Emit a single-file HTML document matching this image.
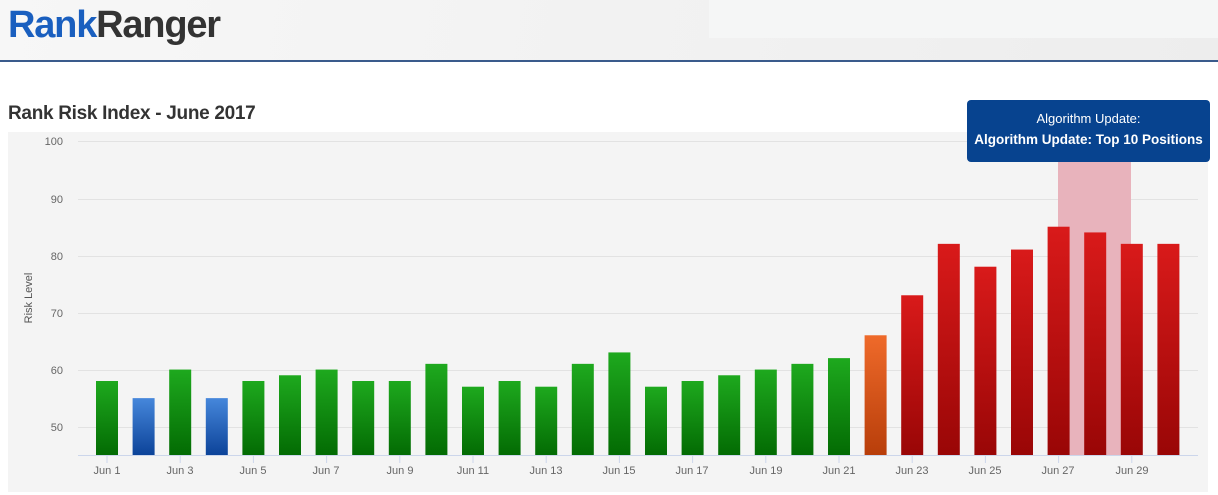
<!DOCTYPE html>
<html><head><meta charset="utf-8"><style>
body{margin:0;width:1218px;height:495px;overflow:hidden;background:#fff;font-family:"Liberation Sans",sans-serif;position:relative}
.hdr{position:absolute;left:0;top:0;width:1218px;height:60px;background:linear-gradient(100deg,#f7f7f7,#ededed);border-bottom:2px solid #3a5b8c}
.blk{position:absolute;left:709px;top:0;width:509px;height:38px;background:#f5f6f6}
.logo{position:absolute;left:8px;top:4px;font-size:38px;font-weight:bold;letter-spacing:-1.2px;color:#333}
.logo span{color:#1a5fbf}
h1{position:absolute;left:8px;top:103px;margin:0;font-size:19px;font-weight:bold;color:#333;letter-spacing:-0.3px}
.tip{position:absolute;left:967px;top:100px;width:243px;height:62px;background:#07438f;border-radius:4px;color:#fff;text-align:center;font-size:13px}
</style></head><body>
<div class="hdr"><div class="blk"></div><div class="logo"><span>Rank</span>Ranger</div></div>
<h1>Rank Risk Index - June 2017</h1>
<svg id="c" width="1218" height="495" style="position:absolute;left:0;top:0">
<defs>
<linearGradient id="g" x1="0" y1="0" x2="0" y2="1"><stop offset="0" stop-color="#1ea91e"/><stop offset="1" stop-color="#036b03"/></linearGradient>
<linearGradient id="b" x1="0" y1="0" x2="0" y2="1"><stop offset="0" stop-color="#4687db"/><stop offset="1" stop-color="#0c4399"/></linearGradient>
<linearGradient id="o" x1="0" y1="0" x2="0" y2="1"><stop offset="0" stop-color="#ef6a2a"/><stop offset="1" stop-color="#b83e0a"/></linearGradient>
<linearGradient id="r" x1="0" y1="0" x2="0" y2="1"><stop offset="0" stop-color="#d91a1a"/><stop offset="1" stop-color="#990606"/></linearGradient>
</defs>
<rect x="8" y="132" width="1200" height="360" fill="#f4f4f4"/>
<g stroke="#e2e2e2" stroke-width="1">
<line x1="78" x2="1198" y1="141.5" y2="141.5"/><line x1="78" x2="1198" y1="199.5" y2="199.5"/>
<line x1="78" x2="1198" y1="256.5" y2="256.5"/><line x1="78" x2="1198" y1="313.5" y2="313.5"/>
<line x1="78" x2="1198" y1="370.5" y2="370.5"/><line x1="78" x2="1198" y1="427.5" y2="427.5"/>
</g>
<rect x="1058" y="132" width="73" height="323" fill="#e8b3bc"/>
<g font-size="11" fill="#666" text-anchor="end">
<text x="63" y="145">100</text><text x="63" y="203">90</text><text x="63" y="260">80</text>
<text x="63" y="317">70</text><text x="63" y="374">60</text><text x="63" y="431">50</text>
</g>
<text transform="translate(32,298) rotate(-90)" font-size="11" fill="#555" text-anchor="middle">Risk Level</text>
<g id="bars"></g>
<line x1="78" x2="1198" y1="455.5" y2="455.5" stroke="#ccd6eb"/>
<g font-size="11" fill="#666" text-anchor="middle">
<text x="107" y="474">Jun 1</text><text x="180" y="474">Jun 3</text><text x="253" y="474">Jun 5</text>
<text x="326" y="474">Jun 7</text><text x="400" y="474">Jun 9</text><text x="473" y="474">Jun 11</text>
<text x="546" y="474">Jun 13</text><text x="619" y="474">Jun 15</text><text x="692" y="474">Jun 17</text>
<text x="766" y="474">Jun 19</text><text x="839" y="474">Jun 21</text><text x="912" y="474">Jun 23</text>
<text x="985" y="474">Jun 25</text><text x="1058" y="474">Jun 27</text><text x="1132" y="474">Jun 29</text>
</g>
</svg>
<div class="tip"><div style="margin-top:11px">Algorithm Update:</div><div style="margin-top:6px;font-weight:bold;font-size:13.5px">Algorithm Update: Top 10 Positions</div></div>
<script>
var v=[58,55,60,55,58,59,60,58,58,61,57,58,57,61,63,57,58,59,60,61,62,66,73,82,78,81,85,84,82,82];
var s='';
for(var i=0;i<30;i++){var x=96+36.6*i,y=141+(100-v[i])*5.714;
var f=i<21?'g':(i==21?'o':'r');if(i==1||i==3)f='b';
s+='<rect x="'+x+'" y="'+y+'" width="22" height="'+(455-y)+'" fill="url(#'+f+')"/>';
if(i%2==0)s+='<line x1="'+(x+11)+'" x2="'+(x+11)+'" y1="455" y2="463" stroke="#ccd6eb"/>';}
document.getElementById('bars').innerHTML=s;
</script>
</body></html>
